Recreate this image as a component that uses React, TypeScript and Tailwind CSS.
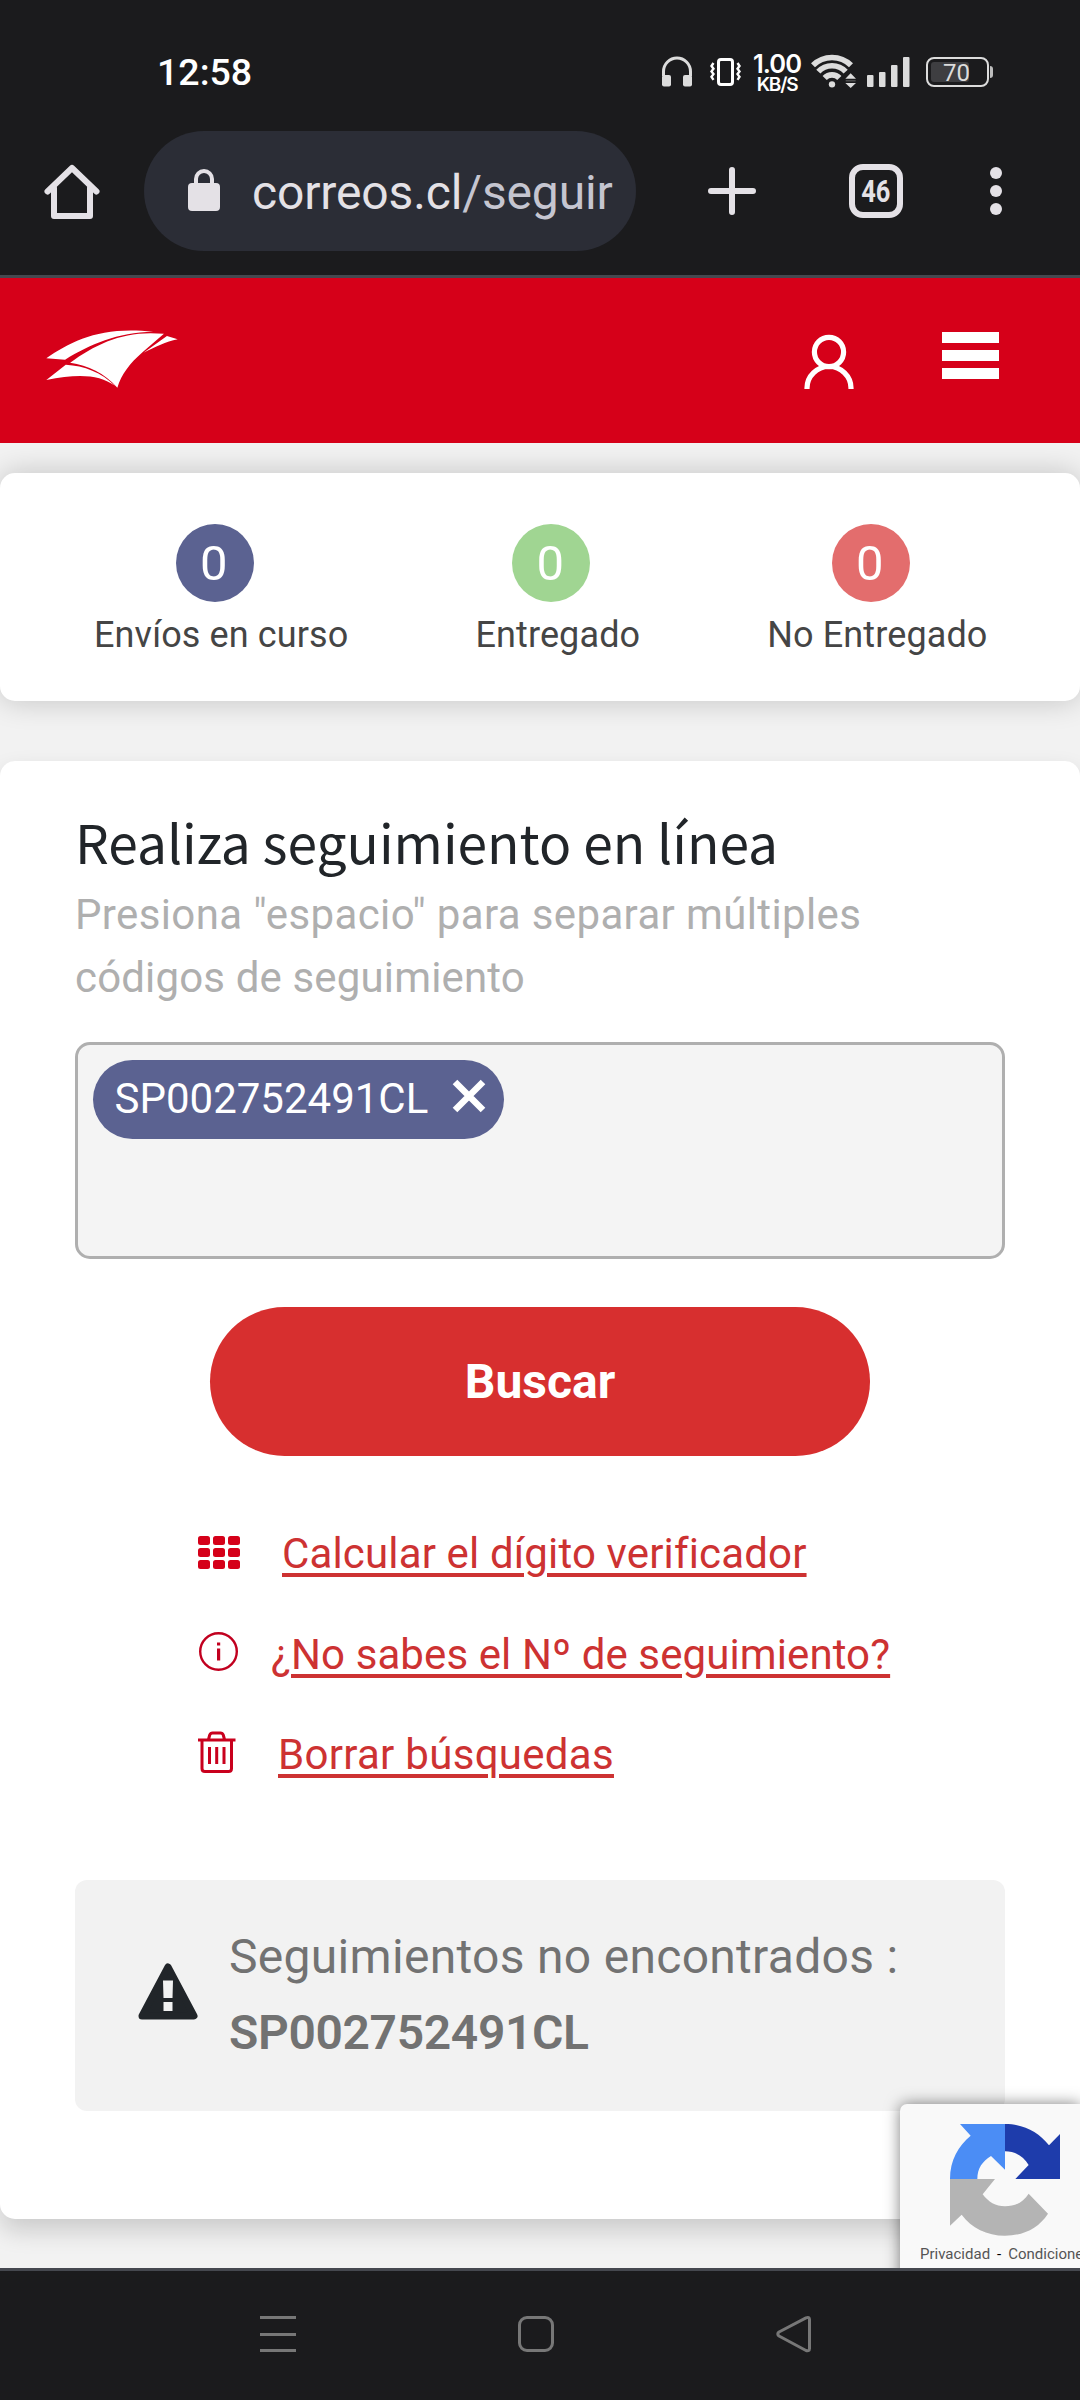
import React from 'react';

function StatusBar() {
  return (
    <div className="flex h-[131px] items-start pl-[157px] text-white">
      <div className="mt-[49px] w-[504px] text-[37.5px] leading-[46px] font-medium">12:58</div>
      <svg className="mt-[56px] h-[31px] w-[32px]" viewBox="0 0 32 31" fill="none">
        <path d="M2.5 20V15.500a13.500 13.500 0 0 1 27 0V20" stroke="#dcdcdc" strokeWidth="3" />
        <rect x="1" y="19" width="9" height="11.500" rx="2" fill="#dcdcdc" />
        <rect x="22" y="19" width="9" height="11.500" rx="2" fill="#dcdcdc" />
      </svg>
      <svg className="mt-[57px] ml-[16px] h-[30px] w-[34px]" viewBox="0 0 34 30" fill="none" stroke="#fff">
        <rect x="9.500" y="2.500" width="14" height="25" rx="2.500" strokeWidth="3" />
        <path d="M4.500 6l-2 3 2 2.700-2 2.700 2 2.700-2 2.700 2 3M28.500 6l2 3-2 2.700 2 2.700-2 2.700 2 2.700-2 3" strokeWidth="2.400" />
      </svg>
      <div className="mt-[51px] ml-[7px] flex w-[54px] flex-col items-center font-['Inter'] font-semibold">
        <span className="text-[25.500px] leading-[25px] tracking-[-0.9px]">1.00</span>
        <span className="text-[19px] leading-[17px] tracking-[-1.200px]">KB/S</span>
      </div>
      <svg className="mt-[53px] ml-[7px] h-[36px] w-[46px]" viewBox="514 70 138 108" fill="none">
        <g stroke="#dcdcdc" strokeWidth="17">
          <path d="M520 107A81 81 0 0 1 634 107" />
          <path d="M536 126A56 56 0 0 1 618 126" />
          <path d="M555 145A30 30 0 0 1 599 145" />
        </g>
        <circle cx="577" cy="164" r="9.500" fill="#dcdcdc" />
        <path d="M617 147h32l-16-16zM617 160h32l-16 15z" fill="#dcdcdc" />
        <path d="M618 153.500h30" stroke="#666" strokeWidth="3" />
      </svg>
      <svg className="mt-[56px] ml-[9px] h-[32px] w-[45px]" viewBox="0 0 45 32" fill="#dcdcdc">
        <rect x="1" y="19" width="6.500" height="12" rx="1" />
        <rect x="13" y="16" width="6.500" height="15" rx="1" />
        <rect x="25" y="9" width="6.500" height="22" rx="1" />
        <rect x="37" y="1" width="6.500" height="30" rx="1" />
      </svg>
      <div className="mt-[57px] ml-[15px] flex h-[30px] w-[63px] items-center rounded-[8px] border-2 border-[#dcdcdc] p-[3px]">
        <div className="flex h-[20px] w-[38px] rounded-[3px] bg-[#3e3e41] pl-[12px] text-[24px] leading-[22px] text-[#dcdcdc]">70</div>
      </div>
      <div className="mt-[66px] ml-[1px] h-[12px] w-[3px] rounded-r-sm bg-[#bdbdbd]" />
    </div>
  );
}

function BrowserBar() {
  return (
    <div className="flex h-[144px] items-start">
      <svg className="mt-[30px] ml-[42px] h-[60px] w-[60px]" viewBox="0 0 60 60" fill="none" stroke="#e4e1e6" strokeWidth="6" strokeLinecap="round" strokeLinejoin="round">
        <path d="M5.500 30.500L30 7l24.500 23.500" />
        <path d="M12 27v28h36V27" />
      </svg>
      <div className="ml-[42px] flex h-[120px] w-[492px] items-start rounded-full bg-[#2b2d36] pl-[44px]">
        <svg className="mt-[38px] h-[42px] w-[32px]" viewBox="0 0 32 42" fill="none">
          <rect y="14" width="32" height="28" rx="4" fill="#e4e1e6" />
          <path d="M8 16V10a8 8 0 0 1 16 0v6" stroke="#e4e1e6" strokeWidth="4" />
        </svg>
        <div className="mt-[32px] ml-[32px] text-[48px] leading-[60px] tracking-[-0.14px] whitespace-nowrap text-[#e4e1e6]">
          correos.cl<span className="text-[#c5c5d0]">/seguir</span>
        </div>
      </div>
      <svg className="mt-[36px] ml-[72px] h-[48px] w-[48px]" viewBox="0 0 48 48" stroke="#e4e1e6" strokeWidth="6" strokeLinecap="round">
        <path d="M3 24h42M24 3v42" />
      </svg>
      <div className="mt-[33px] ml-[93px] flex h-[54px] w-[54px] items-center justify-center rounded-[14px] border-6 border-[#e4e1e6]">
        <span className="origin-center scale-x-[0.82] text-[31px] leading-none font-bold text-[#e4e1e6]">46</span>
      </div>
      <div className="mt-[36px] ml-[87px] flex flex-col gap-[6px]">
        <i className="size-[12px] rounded-full bg-[#e4e1e6]" />
        <i className="size-[12px] rounded-full bg-[#e4e1e6]" />
        <i className="size-[12px] rounded-full bg-[#e4e1e6]" />
      </div>
    </div>
  );
}

function SiteHeader() {
  return (
    <header className="flex h-[165px] items-start bg-[#d60019] pl-[46px]">
      <svg className="mt-[51px] h-[60px] w-[132px]" viewBox="18 28 394 178" fill="#fff">
        <path d="M19 115C95 62 185 18 338 36C230 38 150 74 75 119Z" />
        <path d="M90 128C170 70 255 30 370 42L306 97C268 130 243 163 231 203C192 158 144 137 90 128Z" />
        <path d="M77 134C132 137 184 157 224 197C176 162 110 161 19 180Z" />
        <path d="M379 48L411 58C375 64 345 82 309 98Z" />
      </svg>
      <svg className="mt-[56px] ml-[625.600px] h-[55px] w-[50px]" viewBox="0 0 50 55" fill="none" stroke="#fff" strokeWidth="5.200">
        <circle cx="25" cy="18" r="14.600" />
        <path d="M3 55v-1a22 21.500 0 0 1 44 0v1" />
      </svg>
      <div className="mt-[54px] ml-[88.400px] flex w-[57px] flex-col gap-[7px]">
        <i className="h-[11px] bg-white" />
        <i className="h-[11px] bg-white" />
        <i className="h-[11px] bg-white" />
      </div>
    </header>
  );
}

function Stat({ color, label }: { color: string; label: string }) {
  return (
    <div className="flex flex-col items-center">
      <div className={`mr-[13px] flex h-[78px] w-[78px] justify-center rounded-full pr-[2px] text-[49px] leading-[80px] text-white ${color}`}>0</div>
      <div className="mt-[8px] text-[36px] leading-[50px] tracking-[0.120px] whitespace-nowrap text-[#454545]">{label}</div>
    </div>
  );
}

const linkClass = 'underline underline-offset-[5px] decoration-[3.500px]';

export default function App() {
  return (
    <div className="relative flex h-[2400px] w-[1080px] flex-col overflow-hidden bg-[#f2f2f2] font-['Roboto',sans-serif]">
      <div className="h-[278px] shrink-0 border-b-3 border-[#45484f] bg-[#1b1b1d]">
        <StatusBar />
        <BrowserBar />
      </div>
      <SiteHeader />

      <section className="mt-[30px] flex h-[228px] shrink-0 gap-[127px] rounded-[15px] bg-white pt-[51px] pl-[94px] shadow-[0_0_30px_rgba(0,0,0,0.2)]">
        <Stat color="bg-[#5b6291]" label="Envíos en curso" />
        <Stat color="bg-[#a0d592]" label="Entregado" />
        <Stat color="bg-[#e36d6d]" label="No Entregado" />
      </section>

      <main className="mt-[60px] flex h-[1458px] shrink-0 flex-col rounded-[15px] bg-white px-[75px] pt-[44px] shadow-[0_12px_24px_rgba(0,0,0,0.16)]">
        <h1 className="font-['Noto_Sans_CJK_SC',sans-serif] text-[53.300px] leading-[72px] text-[#212529]">Realiza seguimiento en línea</h1>
        <div className="mt-[6px] text-[42px] leading-[63px] whitespace-nowrap text-[#afafaf]">
          <div className="tracking-[0.370px]">Presiona "espacio" para separar múltiples</div>
          <div className="tracking-[0.150px]">códigos de seguimiento</div>
        </div>

        <div className="mt-[33px] flex h-[217px] items-start rounded-[15px] border-3 border-[#afafaf] bg-[#f4f4f4] pt-[15px] pl-[15px]">
          <div className="flex h-[79px] w-[411px] items-center rounded-full bg-[#5b6291] pl-[21.500px] text-white">
            <span className="w-[337px] pb-[2px] text-[42px] leading-[50px]">SP002752491CL</span>
            <svg className="mb-[7px] h-[34px] w-[34px]" viewBox="0 0 34 34" stroke="#fff" strokeWidth="6.500">
              <path d="M3 3l28 28M31 3L3 31" />
            </svg>
          </div>
        </div>

        <button className="mt-[48px] h-[149px] w-[660px] self-center rounded-full bg-[#d72f2f] text-[48px] leading-[60px] font-bold text-white">Buscar</button>

        <nav className="mt-[47px] flex flex-col pl-[122px] text-[42px] leading-[50px] whitespace-nowrap text-[#cd3232]">
          <div className="flex h-[99.500px] items-center">
            <svg className="mb-[1px] h-[33px] w-[43px]" viewBox="0 0 43 33" fill="#d50019">
              <rect x="1" y="0" width="12" height="9" rx="2.500" /><rect x="16" y="0" width="12" height="9" rx="2.500" /><rect x="31" y="0" width="12" height="9" rx="2.500" />
              <rect x="1" y="12" width="12" height="9" rx="2.500" /><rect x="16" y="12" width="12" height="9" rx="2.500" /><rect x="31" y="12" width="12" height="9" rx="2.500" />
              <rect x="1" y="24" width="12" height="9" rx="2.500" /><rect x="16" y="24" width="12" height="9" rx="2.500" /><rect x="31" y="24" width="12" height="9" rx="2.500" />
            </svg>
            <a className={`ml-[42px] pt-[3px] tracking-[0.150px] ${linkClass}`}>Calcular el dígito verificador</a>
          </div>
          <div className="flex h-[99.500px] items-center">
            <svg className="mb-[2px] ml-[1px] h-[41px] w-[41px]" viewBox="0 0 41 41" fill="#c1001f">
              <circle cx="20.500" cy="20.500" r="18.300" fill="none" stroke="#c1001f" strokeWidth="2.400" />
              <path d="M19 11.500h3.200v3H19zM19 17.500h3.200v12H19z" />
            </svg>
            <a className={`ml-[32px] pt-[5px] tracking-[0.100px] ${linkClass}`}>¿No sabes el Nº de seguimiento?</a>
          </div>
          <div className="flex h-[99.500px] items-center">
            <svg className="h-[42px] w-[40px]" viewBox="0 0 40 42" fill="none" stroke="#c9001d" strokeWidth="3">
              <path d="M1 9h37.500M5 10v27.500q0 3 3 3h23.500q3 0 3-3V10M11.500 8.500l1.200-4.500q.8-2 2.800-2h8q2 0 2.800 2l1.200 4.500" />
              <path d="M12.500 16v17M19.700 16v17M27 16v17" />
            </svg>
            <a className={`ml-[41px] pt-[6px] tracking-[0.300px] ${linkClass}`}>Borrar búsquedas</a>
          </div>
        </nav>

        <div className="mt-[78.500px] flex h-[231px] items-center rounded-[12px] bg-[#f2f2f2] pl-[62px] text-[48px] leading-[76px] whitespace-nowrap text-[#727272]">
          <svg className="mt-[-9px] h-[58px] w-[62px]" viewBox="0 0 62 58">
            <path d="M31 5L57 54H5Z" fill="#212529" stroke="#212529" strokeWidth="7" strokeLinejoin="round" />
            <path d="M26 18.500h10l-.5 17.500h-9zM26.500 40h9v9h-9z" fill="#f2f2f2" />
          </svg>
          <div className="-mt-[2px] ml-[30px]">
            <div className="tracking-[0.300px]">Seguimientos no encontrados :</div>
            <div className="font-semibold tracking-[-0.350px]">SP002752491CL</div>
          </div>
        </div>
      </main>

      <div className="absolute top-[2104px] right-0 h-[190px] w-[180px] rounded-tl-[7px] bg-[#f9f9f9] shadow-[0_0_15px_rgba(0,0,0,0.5)]">
        <svg className="mt-[18px] ml-[49px] h-[116px] w-[113px]" viewBox="267 186 339 348">
          <path d="M435 192H300L332 227C295 258 270 300 270 357H352C352 325 368 303 393 288L435 329Z" fill="#4b8df5" />
          <path d="M435 192C490 192 535 215 567 256L600 222V357H466L506 315C490 288 465 274 435 274Z" fill="#1e3cab" />
          <path d="M270 357H405L368 403C385 426 407 439 435 439C465 439 490 427 506 401L564 461C535 505 490 527 435 527C380 527 335 504 305 464L270 497Z" fill="#b4b4b4" />
        </svg>
        <div className="mt-[1px] ml-[20px] w-[160px] overflow-hidden text-[15px] leading-[30px] whitespace-nowrap text-[#555]">
          Privacidad<span className="mx-[7px] text-black">-</span>Condiciones
        </div>
      </div>

      <footer className="absolute inset-x-0 bottom-0 flex h-[132px] items-start border-t-3 border-[#45484f] bg-[#1b1b1d] pl-[260px]">
        <div className="mt-[45px] flex w-[36px] flex-col gap-[13.500px]">
          <i className="h-[3px] bg-[#777]" />
          <i className="h-[3px] bg-[#777]" />
          <i className="h-[3px] bg-[#777]" />
        </div>
        <div className="mt-[45px] ml-[222px] size-[36px] rounded-[9px] border-3 border-[#777]" />
        <svg className="mt-[44px] ml-[221px] h-[38px] w-[37px]" viewBox="0 0 37 38" fill="none" stroke="#777" strokeWidth="3" strokeLinejoin="round">
          <path d="M31 2.800L4 17Q1.500 19 4 21L31 35.500Q34.500 36.500 34.500 33.500V4.500Q34.500 1.500 31 2.800Z" />
        </svg>
      </footer>
    </div>
  );
}
